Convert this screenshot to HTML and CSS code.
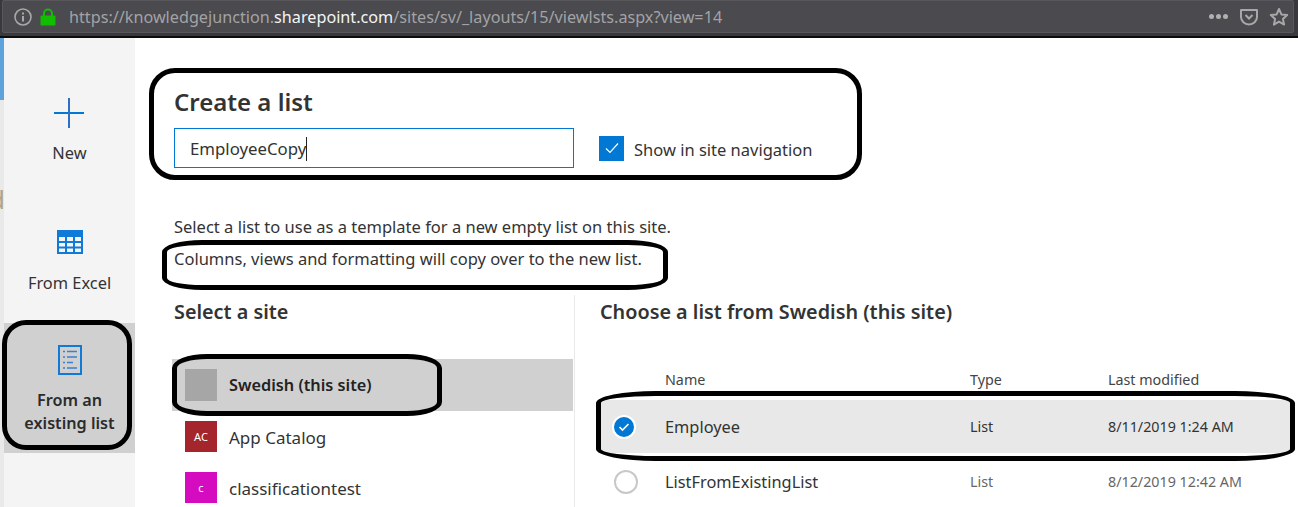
FILE: index.html
```html
<!DOCTYPE html>
<html lang="en">

<head>
    <meta charset="UTF-8">
    <title>Create a list</title>
    <link rel="stylesheet" href="styles.css">
</head>

<body>
    <div class="toolbar">
        <div class="urlbar">
            <svg class="info" width="18" height="18" viewBox="0 0 18 18">
                <circle cx="9" cy="9" r="8" fill="none" stroke="#a8a8a8" stroke-width="1.6" />
                <rect x="8" y="8" width="2" height="5.500" fill="#a8a8a8" />
                <rect x="8" y="4.500" width="2" height="2" fill="#a8a8a8" />
            </svg>
            <svg class="lock" width="16" height="18" viewBox="0 0 16 18">
                <path d="M4 8V5.500a4 4 0 0 1 8 0V8" fill="none" stroke="#12bc00" stroke-width="2" />
                <rect x="0.500" y="7.500" width="15" height="10" rx="1" fill="#12bc00" />
            </svg>
            <div class="url">https://knowledgejunction.<span class="domain">sharepoint.com</span>/sites/sv/_layouts/15/viewlsts.aspx?view=14</div>
            <div class="dots"><span></span><span></span><span></span></div>
            <svg class="pocket" width="20" height="18" viewBox="0 0 20 18">
                <path d="M2 2h16v7a8 7.500 0 0 1-16 0z" fill="none" stroke="#a8a8a8" stroke-width="2" stroke-linejoin="round" />
                <path d="M6.500 7l3.500 3.500L13.500 7" fill="none" stroke="#a8a8a8" stroke-width="2" />
            </svg>
            <svg class="star" width="20" height="20" viewBox="0 0 20 20">
                <path d="M10 2l2.400 5.400 5.800.6-4.300 3.900 1.200 5.700L10 14.700l-5.100 2.900 1.200-5.700L1.800 8l5.800-.6z" fill="none" stroke="#a8a8a8" stroke-width="2" stroke-linejoin="round" />
            </svg>
        </div>
    </div>

    <div class="page">
        <div class="edge">
            <div class="edge-blue"></div>
            <div class="edge-letter">d</div>
        </div>

        <div class="sidebar">
            <div class="side-item side-new">
                <svg class="plus" width="32" height="32" viewBox="0 0 32 32">
                    <rect x="1" y="15" width="30" height="2" fill="#0078d4" />
                    <rect x="15" y="1" width="2" height="30" fill="#2b6fc9" />
                </svg>
                <div class="side-label">New</div>
            </div>
            <div class="side-item side-excel">
                <svg width="26" height="24" viewBox="0 0 26 24">
                    <rect x="1" y="1" width="24" height="22" fill="none" stroke="#0f7ad8" stroke-width="2" />
                    <rect x="1" y="1" width="24" height="6" fill="#0f7ad8" />
                    <path d="M1 12h24M1 17.500h24M9 7v16M17 7v16" stroke="#0f7ad8" stroke-width="2" />
                </svg>
                <div class="side-label">From Excel</div>
            </div>
            <div class="side-item side-existing">
                <svg width="24" height="30" viewBox="0 0 24 30">
                    <rect x="1" y="1" width="22" height="28" fill="none" stroke="#0f7ad8" stroke-width="2" />
                    <path d="M5 6.500h2M9 6.500h10M5 12h2M9 12h10M5 17.500h2M9 17.500h6M5 23h2M9 23h10" stroke="#3a7fd0" stroke-width="1.500" />
                </svg>
                <div class="side-label side-bold">From an<br>existing list</div>
                <div class="ring ring-existing"></div>
            </div>
        </div>

        <div class="main">
            <div class="create">
                <h1>Create a list</h1>
                <div class="create-row">
                    <div class="name-input">EmployeeCopy<span class="caret"></span></div>
                    <div class="check">
                        <svg width="14" height="12" viewBox="0 0 14 12">
                            <path d="M1 6.500l4 4L13 1.500" fill="none" stroke="#fff" stroke-width="1.200" />
                        </svg>
                    </div>
                    <div class="check-label">Show in site navigation</div>
                </div>
                <div class="ring ring-create"></div>
            </div>

            <p class="intro">Select a list to use as a template for a new empty list on this site.</p>
            <p class="intro intro-second">Columns, views and formatting will copy over to the new list.
                <span class="ring ring-intro"></span>
            </p>

            <div class="columns">
                <div class="sites">
                    <h2>Select a site</h2>
                    <div class="site site-selected">
                        <div class="tile tile-gray"></div>
                        <div class="site-name site-bold">Swedish (this site)</div>
                        <div class="ring ring-site"></div>
                    </div>
                    <div class="site">
                        <div class="tile tile-red">AC</div>
                        <div class="site-name">App Catalog</div>
                    </div>
                    <div class="site">
                        <div class="tile tile-pink">c</div>
                        <div class="site-name">classificationtest</div>
                    </div>
                </div>

                <div class="lists">
                    <h2>Choose a list from Swedish (this site)</h2>
                    <div class="list-row list-head">
                        <div class="col-name">Name</div>
                        <div class="col-type">Type</div>
                        <div class="col-date">Last modified</div>
                    </div>
                    <div class="list-row list-item list-selected">
                        <div class="radio radio-on">
                            <svg width="12" height="10" viewBox="0 0 12 10">
                                <path d="M1.500 5l3 3 6-6" fill="none" stroke="#fff" stroke-width="1.600" />
                            </svg>
                        </div>
                        <div class="col-name item-name">Employee</div>
                        <div class="col-type">List</div>
                        <div class="col-date">8/11/2019 1:24 AM</div>
                        <div class="ring ring-row"></div>
                    </div>
                    <div class="list-row list-item list-plain">
                        <div class="radio"></div>
                        <div class="col-name item-name">ListFromExistingList</div>
                        <div class="col-type">List</div>
                        <div class="col-date">8/12/2019 12:42 AM</div>
                    </div>
                </div>
            </div>
        </div>
    </div>
</body>

</html>
```
FILE: styles.css
```css
* {
    box-sizing: border-box;
}

html,
body {
    height: 100%;
}

body {
    margin: 0;
    overflow: hidden;
    background-color: #fff;
    color: #333;
    font-family: "Noto Sans", "Open Sans", sans-serif;
}

h1,
h2,
p {
    margin: 0;
}

.toolbar {
    height: 38px;
    padding: 0 4px 2px 2px;
    background-color: #38383d;
    border-bottom: 2px solid #0c0c0d;
}

.urlbar {
    display: flex;
    align-items: center;
    height: 33px;
    padding: 0 4px 0 11px;
    background-color: #4a4a4f;
    border: 1px solid #58585c;
    border-radius: 2px;
}

.lock {
    margin-left: 8px;
}

.url {
    flex: 1;
    margin-left: 13px;
    color: #a3a3a5;
    font-size: 16.200px;
    white-space: nowrap;
}

.domain {
    color: #f4f4f4;
}

.dots {
    display: flex;
    gap: 2px;
    margin-right: 11px;
}

.dots span {
    width: 5px;
    height: 5px;
    border-radius: 50%;
    background-color: #b0b0b0;
}

.star {
    margin-left: 10px;
}

.page {
    display: flex;
    height: 469px;
}

.edge {
    width: 4px;
    background-color: #e9e9e9;
    overflow: hidden;
}

.edge-blue {
    height: 62px;
    background-color: #5ea3dc;
}

.edge-letter {
    margin: 84px 0 0 -11px;
    color: #b0a48c;
    font-size: 26px;
    line-height: 30px;
}

.sidebar {
    display: flex;
    flex-direction: column;
    width: 131px;
    background-color: #f4f4f4;
}

.side-item {
    position: relative;
    display: flex;
    flex-direction: column;
    align-items: center;
    text-align: center;
}

.side-new {
    height: 131px;
    padding-top: 59px;
}

.plus {
    margin-right: 1px;
}

.side-new .side-label {
    margin-top: 12px;
}

.side-excel {
    height: 154px;
    padding-top: 61px;
}

.side-excel .side-label {
    margin-top: 17px;
}

.side-existing {
    height: 130px;
    padding-top: 22px;
    background-color: #d0d0d0;
}

.side-existing .side-label {
    margin-top: 14px;
}

.side-label {
    font-size: 16.400px;
    line-height: 23px;
}

.side-bold {
    font-size: 16.200px;
    font-weight: 600;
    color: #2b2b2b;
}

.ring {
    position: absolute;
    border: 5px solid #000;
    pointer-events: none;
}

.ring-existing {
    top: -3px;
    left: -2px;
    width: 130px;
    height: 130px;
    border-radius: 24px;
}

.main {
    flex: 1;
    min-width: 0;
    padding: 0 0 0 39px;
}

.create {
    position: relative;
    padding-top: 48px;
}

.create h1 {
    font-size: 24px;
    font-weight: 600;
    line-height: 32px;
    color: #333;
}

.create-row {
    display: flex;
    align-items: center;
    margin-top: 10px;
}

.name-input {
    display: flex;
    align-items: center;
    width: 400px;
    height: 40px;
    padding: 1px 0 0 15px;
    border: 1px solid #0078d4;
    font-size: 16.800px;
}

.caret {
    width: 1px;
    height: 24px;
    background-color: #222;
}

.check {
    display: flex;
    align-items: center;
    justify-content: center;
    width: 25px;
    height: 25px;
    margin-left: 25px;
    background-color: #0078d4;
}

.check-label {
    margin: 2px 0 0 10px;
    font-size: 16.500px;
}

.ring-create {
    top: 30px;
    left: -25px;
    width: 713px;
    height: 112px;
    border-radius: 26px;
}

.intro {
    position: relative;
    font-size: 16.500px;
    line-height: 32px;
}

.create + .intro {
    margin-top: 43px;
}

.ring-intro {
    top: -3px;
    left: -12px;
    width: 506px;
    height: 50px;
    border-radius: 40px / 12px;
}

.columns {
    display: flex;
    height: 212px;
    margin-top: 20px;
}

.sites {
    width: 403px;
    margin-left: -2px;
    padding-right: 1px;
    border-right: 1px solid #eaeaea;
}

.sites h2 {
    margin-left: 2px;
}

h2 {
    font-size: 19.800px;
    font-weight: 600;
    line-height: 34px;
}

.site {
    position: relative;
    display: flex;
    align-items: center;
    height: 51px;
    padding-left: 13px;
}

.sites h2 + .site {
    margin-top: 30px;
}

.site-selected {
    height: 52px;
    background-color: #d0d0d0;
}

.tile {
    display: flex;
    align-items: center;
    justify-content: center;
    width: 32px;
    height: 31px;
    color: #fff;
    font-size: 11px;
}

.tile-gray {
    height: 32px;
    background-color: #a6a6a6;
}

.tile-red {
    background-color: #a4262c;
}

.tile-pink {
    background-color: #d40bbf;
}

.site-name {
    margin-left: 12px;
    padding-top: 2px;
    font-size: 17px;
}

.site-bold {
    padding-top: 0;
    font-size: 16.300px;
    font-weight: 600;
    color: #222;
}

.ring-site {
    top: -5px;
    left: 0;
    width: 270px;
    height: 62px;
    border-radius: 35px / 14px;
}

.lists {
    flex: 1;
    min-width: 0;
}

.lists h2 {
    margin-left: 25px;
}

.list-row {
    position: relative;
    display: flex;
    align-items: center;
}

.list-head {
    height: 28px;
    margin-top: 36px;
    font-size: 14.300px;
    color: #444;
}

.list-item {
    height: 53px;
    font-size: 14.300px;
}

.list-selected {
    margin: 7px 6px 0 25px;
    background-color: #e8e8e8;
}

.list-plain {
    margin-top: 2px;
    color: #666;
}

.col-name {
    width: 305px;
    margin-left: 90px;
}

.list-selected .col-name {
    margin-left: 29px;
}

.list-plain .col-name {
    margin-left: 0;
}

.item-name {
    font-size: 16.350px;
    color: #333;
}

.col-type {
    width: 138px;
}

.radio {
    display: flex;
    align-items: center;
    justify-content: center;
    width: 24px;
    height: 24px;
    margin: 0 27px 0 39px;
    border: 2px solid #c8c8c8;
    border-radius: 50%;
}

.list-selected .radio {
    margin: 0 0 0 12px;
}

.radio-on {
    background-color: #0078d4;
    border-color: #fff;
}

.ring-row {
    top: -9px;
    left: -4px;
    right: -3px;
    height: 70px;
    border-radius: 60px / 12px;
}
```
